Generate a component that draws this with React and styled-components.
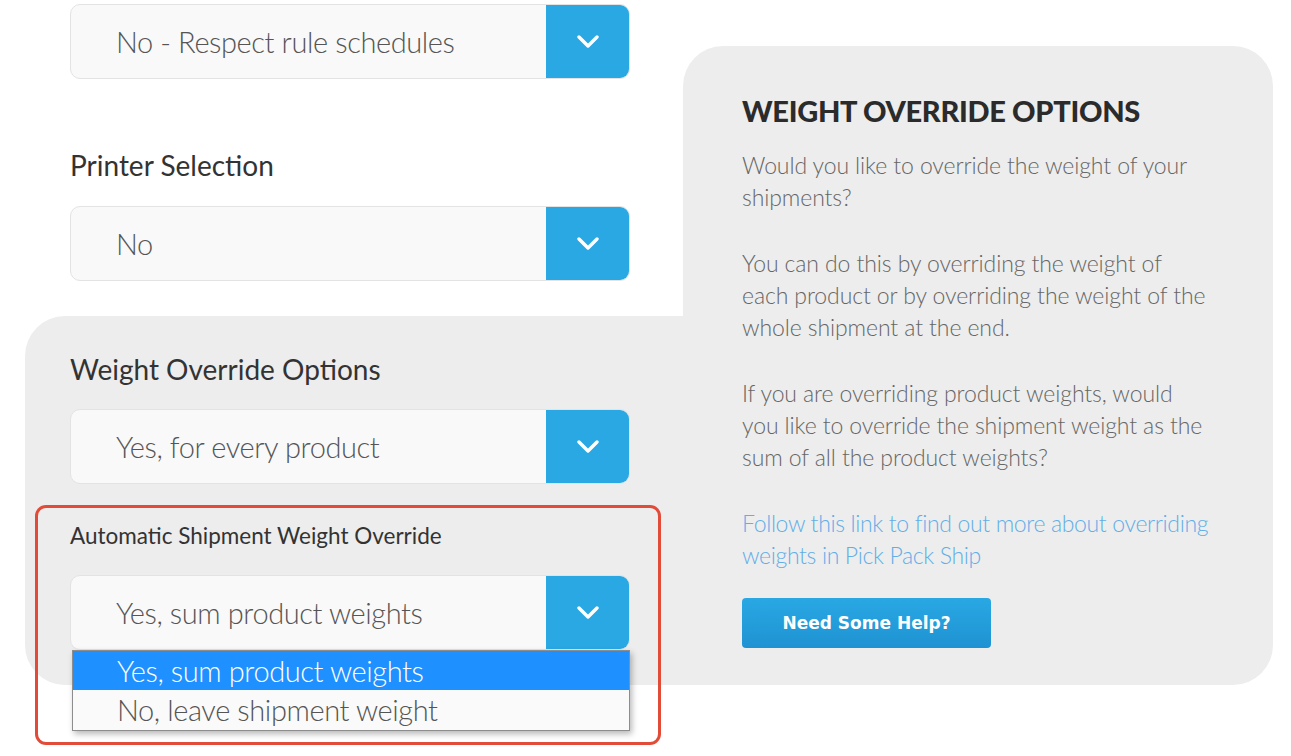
import styled, { createGlobalStyle } from "styled-components";

const GlobalStyle = createGlobalStyle`
  body {
    margin: 0;
    background: #ffffff;
    font-family: "Lato", "Open Sans", sans-serif;
    overflow: hidden;
  }
`;

const fields = {
  schedule: "No - Respect rule schedules",
  printer: "No",
  weight: "Yes, for every product",
  automatic: "Yes, sum product weights",
};

const options = ["Yes, sum product weights", "No, leave shipment weight"];

function Chevron() {
  return (
    <svg width="22" height="14" viewBox="0 0 22 14">
      <path
        d="M2 2 L11 11 L20 2"
        fill="none"
        stroke="#ffffff"
        strokeWidth="3.4"
        strokeLinecap="round"
        strokeLinejoin="round"
      />
    </svg>
  );
}

function Select({ value }) {
  return (
    <SelectBox>
      <SelectValue>{value}</SelectValue>
      <SelectButton>
        <Chevron />
      </SelectButton>
    </SelectBox>
  );
}

export default function App() {
  return (
    <>
      <GlobalStyle />
      <Page>
        <LeftColumn>
          <Select value={fields.schedule} />
          <Field>
            <Label>Printer Selection</Label>
            <Select value={fields.printer} />
          </Field>
          <GraySection>
            <Label>Weight Override Options</Label>
            <Select value={fields.weight} />
            <AutoField>
              <Highlight />
              <SmallLabel>Automatic Shipment Weight Override</SmallLabel>
              <Select value={fields.automatic} />
              <OptionList>
                {options.map((o, i) => (
                  <Option key={o} selected={i === 0}>
                    {o}
                  </Option>
                ))}
              </OptionList>
            </AutoField>
          </GraySection>
        </LeftColumn>
        <InfoPanel>
          <InfoTitle>WEIGHT OVERRIDE OPTIONS</InfoTitle>
          <Paragraph>Would you like to override the weight of your shipments?</Paragraph>
          <Paragraph>
            You can do this by overriding the weight of each product or by
            overriding the weight of the whole shipment at the end.
          </Paragraph>
          <Paragraph>
            If you are overriding product weights, would you like to override
            the shipment weight as the sum of all the product weights?
          </Paragraph>
          <InfoLink href="#">
            Follow this link to find out more about overriding weights in Pick
            Pack Ship
          </InfoLink>
          <HelpButton>Need Some Help?</HelpButton>
        </InfoPanel>
      </Page>
    </>
  );
}

const Page = styled.div`
  width: 1291px;
  height: 756px;
  display: grid;
  grid-template-columns: 658px 590px;
  align-items: start;
  padding-left: 25px;
  box-sizing: border-box;
`;

const LeftColumn = styled.div`
  display: flex;
  flex-direction: column;
  padding-top: 4px;
  height: 681px;
`;

const Field = styled.div`
  display: flex;
  flex-direction: column;
  padding: 68px 0 0 45px;
  margin-bottom: 35px;
`;

const Label = styled.div`
  font-size: 28px;
  font-weight: 400;
  color: #333333;
  letter-spacing: 0px;
  height: 36px;
  line-height: 36px;
  margin-bottom: 23px;
`;

const SmallLabel = styled.div`
  font-size: 22.5px;
  color: #333333;
  letter-spacing: 0px;
  line-height: 30px;
  margin-bottom: 24px;
`;

const SelectBox = styled.div`
  width: 560px;
  height: 75px;
  display: flex;
  box-sizing: border-box;
  background: #f9f9f9;
  border: 1px solid #e3e3e3;
  border-radius: 10px;
  overflow: hidden;

  ${LeftColumn} > & {
    margin-left: 45px;
  }
`;

const SelectValue = styled.div`
  flex: 1;
  display: flex;
  align-items: center;
  padding-left: 45px;
  font-size: 29px;
  font-weight: 300;
  color: #555555;
  letter-spacing: -0.4px;
`;

const SelectButton = styled.div`
  width: 84px;
  display: flex;
  align-items: center;
  justify-content: center;
  background: #29a8e4;
  margin: -1px -1px -1px 0;
`;

const GraySection = styled.div`
  flex: 1;
  background: #ededed;
  border-radius: 40px 0 0 40px;
  padding: 35px 0 0 45px;
  display: flex;
  flex-direction: column;

  & > ${Label} {
    margin-bottom: 22px;
  }
`;

const AutoField = styled.div`
  position: relative;
  margin-top: 37px;
`;

const Highlight = styled.div`
  position: absolute;
  left: -35px;
  top: -16px;
  width: 626px;
  height: 240px;
  box-sizing: border-box;
  border: 3px solid #e14b37;
  border-radius: 11px;
  pointer-events: none;
`;

const OptionList = styled.div`
  position: absolute;
  left: 2px;
  top: 129px;
  width: 558px;
  box-sizing: border-box;
  background: #fafafa;
  border: 1px solid #8d8d8d;
  box-shadow: 2px 3px 6px rgba(0, 0, 0, 0.28);
  z-index: 2;
`;

const Option = styled.div`
  height: ${(p) => (p.selected ? "39px" : "40px")};
  line-height: 39px;
  padding-left: 44px;
  font-size: 29px;
  font-weight: 300;
  letter-spacing: -0.4px;
  color: ${(p) => (p.selected ? "#ffffff" : "#555555")};
  background: ${(p) => (p.selected ? "#1e90ff" : "#fafafa")};
`;

const InfoPanel = styled.div`
  margin-top: 46px;
  height: 639px;
  box-sizing: border-box;
  background: #ededed;
  border-radius: 40px 40px 40px 0;
  padding: 45px 63px 0 59px;
  display: flex;
  flex-direction: column;
  align-items: flex-start;
`;

const InfoTitle = styled.h2`
  margin: 0 0 18px;
  font-size: 29px;
  font-weight: 900;
  color: #2b2b2b;
  letter-spacing: -0.3px;
  line-height: 40px;
`;

const Paragraph = styled.p`
  margin: 0 0 34px;
  font-size: 23px;
  font-weight: 300;
  line-height: 32px;
  color: #666666;
  letter-spacing: -0.1px;
`;

const InfoLink = styled.a`
  font-size: 23px;
  font-weight: 300;
  line-height: 32px;
  color: #62aee8;
  text-decoration: none;
  letter-spacing: -0.35px;
  margin-bottom: 27px;
`;

const HelpButton = styled.button`
  width: 249px;
  height: 50px;
  border: none;
  border-radius: 4px;
  background: linear-gradient(#29a8e4, #1f92d2);
  color: #ffffff;
  font-family: "DejaVu Sans", Verdana, sans-serif;
  font-size: 17px;
  font-weight: 700;
  cursor: pointer;
`;
